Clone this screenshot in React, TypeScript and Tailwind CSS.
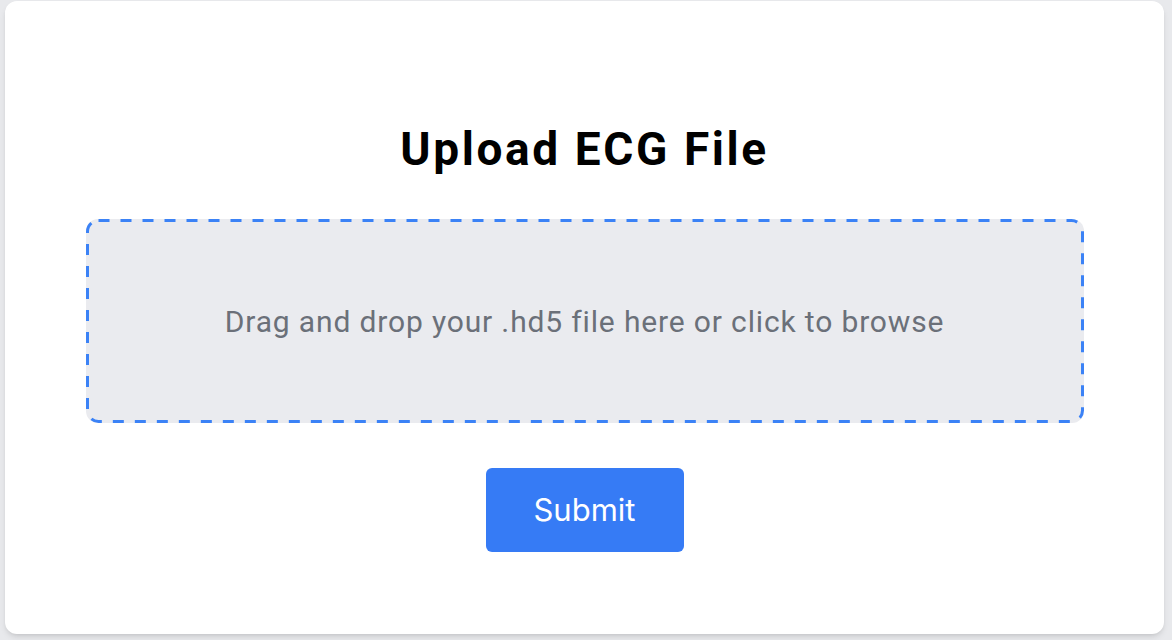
import { useRef, useState } from 'react';

const App = () => {
  const inputRef = useRef<HTMLInputElement>(null);
  const [fileName, setFileName] = useState<string | null>(null);

  return (
    <main className="h-[640px] bg-[#e8e9ec] pl-[5px] pr-[8px] pt-[1px] pb-[6px] font-['Roboto',sans-serif]">
      <div className="h-full bg-white rounded-xl shadow-md flex flex-col items-center pt-[120px]">
        {/* 제목 */}
        <h1 className="text-[46px] leading-[56px] font-bold text-black tracking-[2.6px]">Upload ECG File</h1>

        {/* 드롭존 */}
        <div
          onClick={() => inputRef.current?.click()}
          className="relative mt-[42px] w-[998px] h-[204px] rounded-xl bg-[#eaebef] flex items-center justify-center cursor-pointer"
        >
          <svg className="absolute inset-0 pointer-events-none" width="998" height="204">
            <rect
              x="1.5"
              y="1.5"
              width="995"
              height="201"
              rx="11"
              fill="none"
              stroke="#3b82f6"
              strokeWidth="3"
              strokeDasharray="11 11"
            />
          </svg>
          <p className="text-[30px] text-[#6b7079] tracking-[0.85px]">
            {fileName ?? 'Drag and drop your .hd5 file here or click to browse'}
          </p>
          <input
            ref={inputRef}
            type="file"
            accept=".hd5"
            className="hidden"
            onChange={(e) => setFileName(e.target.files?.[0]?.name ?? null)}
          />
        </div>

        {/* 제출 버튼 */}
        <button className="mt-[45px] w-[198px] h-[84px] bg-[#367bf5] text-white text-[31px] rounded-md font-['Inter',sans-serif]">
          Submit
        </button>
      </div>
    </main>
  );
};

export default App;
